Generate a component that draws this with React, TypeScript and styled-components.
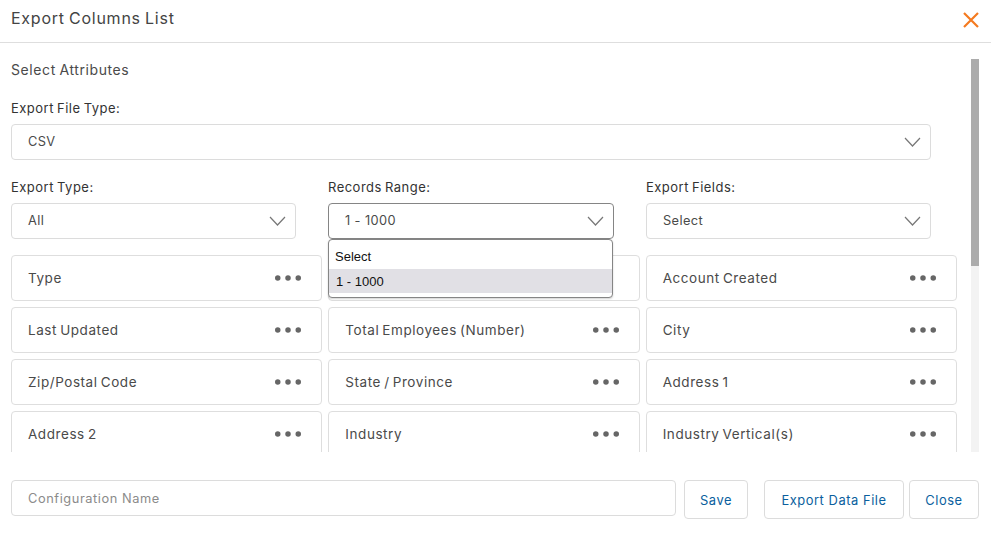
import React from "react";
import styled, { createGlobalStyle } from "styled-components";

const Global = createGlobalStyle`
  html, body { margin: 0; padding: 0; background: #fff; }
  * { box-sizing: border-box; }
  body { font-family: "Inter", "Noto Sans", sans-serif; color: #3f3f3f; }
`;

const Modal = styled.div`
  width: 991px;
  height: 537px;
  display: flex;
  flex-direction: column;
  background: #fff;
  overflow: hidden;
`;

const Header = styled.header`
  height: 43px;
  flex: none;
  display: flex;
  align-items: center;
  justify-content: space-between;
  padding: 0 12px 6px 11px;
  border-bottom: 1px solid #dedede;
`;

const Title = styled.h1`
  margin: 0;
  font-size: 16px;
  font-weight: 400;
  letter-spacing: 0.75px;
  word-spacing: -1px;
  color: #444;
`;

const CloseIcon = styled.button`
  border: 0;
  background: none;
  padding: 0;
  width: 16px;
  height: 16px;
  display: flex;
  margin-top: 3px;
`;

const BodyRow = styled.div`
  height: 409px;
  flex: none;
  display: flex;
  padding-right: 12px;
  overflow: hidden;
`;

const Content = styled.div`
  flex: 1;
  min-width: 0;
  padding: 19px 14px 0 11px;
  overflow: hidden;
`;

const Track = styled.div`
  width: 8px;
  flex: none;
  margin-top: 16px;
  background: #f3f3f3;
`;

const Thumb = styled.div`
  height: 207px;
  background: #acacac;
`;

const SectionTitle = styled.div`
  font-size: 14px;
  line-height: 16px;
  letter-spacing: 0.6px;
  word-spacing: -1px;
  color: #4a4a4a;
`;

const FieldLabel = styled.label`
  display: block;
  font-size: 13px;
  line-height: 16px;
  letter-spacing: 0.48px;
  word-spacing: -1px;
  color: #333;
  margin-bottom: 8px;
`;

const FileType = styled.div`
  margin-top: 22px;
  width: 920px;
`;

const SelectRow = styled.div`
  margin-top: 19px;
  display: grid;
  grid-template-columns: 285px 286px 285px;
  column-gap: 32px;
  width: 920px;
`;

const SelectBox = styled.div<{ $open?: boolean }>`
  height: 36px;
  display: flex;
  align-items: center;
  justify-content: space-between;
  padding: 0 9px 2px 16px;
  border: 1px solid ${(p) => (p.$open ? "#858585" : "#dcdcdc")};
  border-radius: 4px;
  background: #fff;
  font-size: 12.8px;
  letter-spacing: 0.4px;
  color: #4a4a4a;
`;

const ChevronSlot = styled.span`
  display: flex;
  margin-top: 2px;
`;

const RangeField = styled.div`
  position: relative;
`;

const Dropdown = styled.div`
  position: absolute;
  left: 0;
  top: 60px;
  width: 285px;
  height: 59px;
  z-index: 2;
  padding-top: 5px;
  background: #fff;
  border: 1px solid #858585;
  border-radius: 4px;
  box-shadow: 0 1px 2px rgba(0, 0, 0, 0.18);
  overflow: hidden;
  font-family: "Liberation Sans", Arial, sans-serif;
  font-size: 13px;
  color: #111;
`;

const Option = styled.div<{ $active?: boolean }>`
  height: 24px;
  line-height: ${(p) => (p.$active ? "26px" : "24px")};
  padding-left: ${(p) => (p.$active ? "7px" : "6px")};
  background: ${(p) => (p.$active ? "#e1e0e5" : "transparent")};
`;

const Grid = styled.div`
  margin-top: 16px;
  display: grid;
  grid-template-columns: repeat(3, 1fr);
  gap: 6px;
`;

const Attribute = styled.div`
  height: 46px;
  display: flex;
  align-items: center;
  justify-content: space-between;
  padding: 0 20px 0 16px;
  border: 1px solid #dedede;
  border-radius: 4px;
  font-size: 13.5px;
  letter-spacing: 0.56px;
  word-spacing: -1.2px;
  color: #4a4a4a;
`;

const Footer = styled.footer`
  flex: 1;
  display: flex;
  align-items: flex-start;
  padding: 28px 12px 0 11px;
`;

const NameInput = styled.input`
  width: 665px;
  height: 36px;
  padding: 0 16px;
  border: 1px solid #dcdcdc;
  border-radius: 4px;
  font: inherit;
  font-size: 12.8px;
  letter-spacing: 0.58px;
  outline: none;
  &::placeholder { color: #8b8b8b; opacity: 1; }
`;

const Button = styled.button<{ $w: number; $ml: number }>`
  width: ${(p) => p.$w}px;
  margin-left: ${(p) => p.$ml}px;
  height: 39px;
  border: 1px solid #dcdcdc;
  border-radius: 4px;
  background: #fff;
  padding: 2px 0 0;
  font: inherit;
  font-size: 12.9px;
  letter-spacing: 0.55px;
  color: #0b5f9e;
`;

const Chevron = () => (
  <ChevronSlot>
    <svg width="17" height="10" viewBox="0 0 17 10" fill="none">
      <path d="M1 1l7.5 8L16 1" stroke="#777" strokeWidth="1.2" />
    </svg>
  </ChevronSlot>
);

const Dots = () => (
  <svg width="26" height="6" viewBox="0 0 26 6" fill="#666">
    <circle cx="2.75" cy="3" r="2.75" />
    <circle cx="13" cy="3" r="2.75" />
    <circle cx="23.25" cy="3" r="2.75" />
  </svg>
);

const attributes = [
  "Type", "", "Account Created",
  "Last Updated", "Total Employees (Number)", "City",
  "Zip/Postal Code", "State / Province", "Address 1",
  "Address 2", "Industry", "Industry Vertical(s)",
];

export default function App() {
  return (
    <Modal>
      <Global />
      <Header>
        <Title>Export Columns List</Title>
        <CloseIcon aria-label="Close">
          <svg width="16" height="16" viewBox="0 0 16 16" fill="none">
            <path d="M1 1l14 14M15 1L1 15" stroke="#f47a20" strokeWidth="2.2" />
          </svg>
        </CloseIcon>
      </Header>
      <BodyRow>
        <Content>
          <SectionTitle>Select Attributes</SectionTitle>
          <FileType>
            <FieldLabel>Export File Type:</FieldLabel>
            <SelectBox>CSV<Chevron /></SelectBox>
          </FileType>
          <SelectRow>
            <div>
              <FieldLabel>Export Type:</FieldLabel>
              <SelectBox>All<Chevron /></SelectBox>
            </div>
            <RangeField>
              <FieldLabel>Records Range:</FieldLabel>
              <SelectBox $open>1 - 1000<Chevron /></SelectBox>
              <Dropdown>
                <Option>Select</Option>
                <Option $active>1 - 1000</Option>
              </Dropdown>
            </RangeField>
            <div>
              <FieldLabel>Export Fields:</FieldLabel>
              <SelectBox>Select<Chevron /></SelectBox>
            </div>
          </SelectRow>
          <Grid>
            {attributes.map((a, i) => (
              <Attribute key={i}>{a}<Dots /></Attribute>
            ))}
          </Grid>
        </Content>
        <Track><Thumb /></Track>
      </BodyRow>
      <Footer>
        <NameInput placeholder="Configuration Name" />
        <Button $w={64} $ml={8}>Save</Button>
        <Button $w={140} $ml={16}>Export Data File</Button>
        <Button $w={70} $ml={5}>Close</Button>
      </Footer>
    </Modal>
  );
}
